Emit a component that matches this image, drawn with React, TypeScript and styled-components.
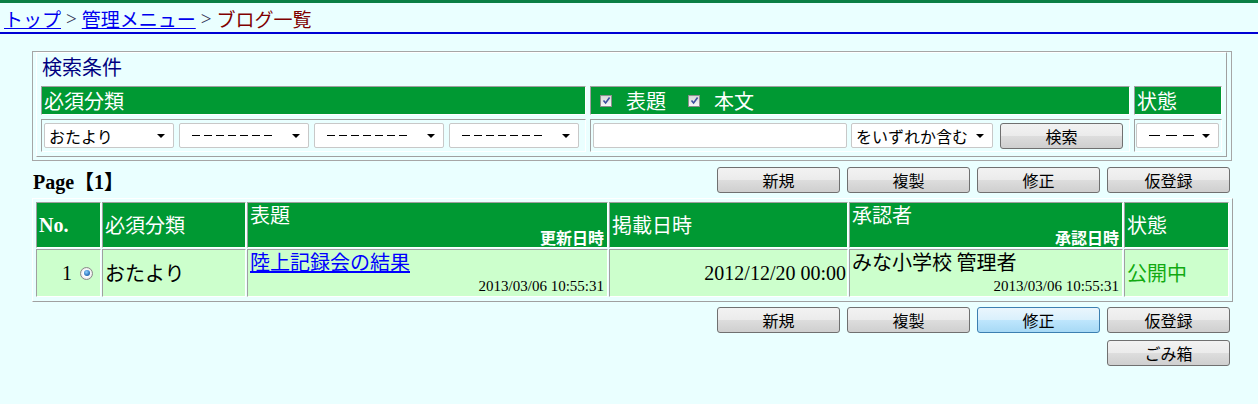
import React from 'react';
import styled, { createGlobalStyle } from 'styled-components';

const JP = `"Noto Sans CJK JP", "Liberation Sans", sans-serif`;
const SERIF = `"Liberation Serif", "Noto Sans CJK JP", serif`;

const GlobalStyle = createGlobalStyle`
  *, *::before, *::after { box-sizing: border-box; }
  html, body { margin: 0; padding: 0; }
  body {
    background: #eaffff;
    font-family: ${SERIF};
    color: #000;
  }
`;

const Screen = styled.div`
  width: 1258px;
  min-height: 404px;
  border-top: 3px solid #0b7f45;
`;

const Crumbs = styled.nav`
  height: 31px;
  display: flex;
  align-items: center;
  gap: 5px;
  padding: 2px 4px 0;
  border-bottom: 2px solid #0000d4;
  font-family: ${JP};
  font-size: 19px;
  line-height: 24px;
`;

const CrumbLink = styled.a`
  color: #0000ee;
  text-decoration: underline;
`;

const Sep = styled.span`
  font-family: ${SERIF};
  color: #333355;
`;

const Current = styled.span`
  color: #800000;
`;

const Content = styled.main`
  width: 1232px;
  padding: 17px 0 0 32px;
`;

/* ---- search box ---- */

const SearchBox = styled.section`
  width: 1200px;
  border: 1px solid #a6a6a6;
  padding: 0 4px 3px 3px;
`;

const SearchTable = styled.table`
  width: 100%;
  table-layout: fixed;
  border-collapse: separate;
  border-spacing: 4px;
  border: 1px solid;
  border-color: #ffffff #a0a0a0 #a0a0a0 #ffffff;
`;

const Col = styled.col<{ $w: number }>`
  width: ${(p) => p.$w}px;
`;

const TitleCell = styled.td`
  padding: 0 0 0 1px;
  height: 25px;
  font-family: ${JP};
  font-size: 20px;
  line-height: 20px;
  color: #000080;
  vertical-align: top;
`;

const HeadCell = styled.td`
  padding: 0 2px;
  height: 29px;
  border: 1px solid;
  border-color: #a0a0a0 #ffffff #ffffff #a0a0a0;
  background: #009933;
  color: #fff;
  font-family: ${JP};
  font-size: 20px;
  line-height: 26px;
  vertical-align: middle;
`;

const HeadInline = styled.div`
  display: flex;
  align-items: center;
  gap: 22px;
  padding-left: 7px;
`;

const CheckLabel = styled.span`
  display: inline-flex;
  align-items: center;
  gap: 14px;
`;

const CheckBox = styled.span`
  width: 12px;
  height: 12px;
  border: 1px solid #8e8f8f;
  background: linear-gradient(#d8d8d8, #f8f8f8);
  display: inline-flex;
  align-items: center;
  justify-content: center;
`;

const FieldCell = styled.td<{ $pl: number }>`
  padding: 0 0 0 ${(p) => p.$pl}px;
  height: 33px;
  border: 1px solid;
  border-color: #a0a0a0 #ffffff #ffffff #a0a0a0;
  vertical-align: middle;
`;

const FieldRow = styled.div<{ $gap: number }>`
  display: flex;
  align-items: center;
  gap: ${(p) => p.$gap}px;
`;

const SelectBox = styled.div<{ $w: number }>`
  width: ${(p) => p.$w}px;
  height: 25px;
  border: 1px solid #c8c8c8;
  border-radius: 2px;
  background: #fff;
  display: flex;
  align-items: center;
  justify-content: space-between;
  padding: 0 8px 0 4px;
  font-family: ${JP};
  font-size: 16px;
  line-height: 20px;
  white-space: nowrap;
  overflow: hidden;
`;

const Dashes = styled.span<{ $gap: number }>`
  display: flex;
  gap: ${(p) => p.$gap}px;
  padding-left: 8px;
`;

const Dash = styled.span<{ $w: number }>`
  width: ${(p) => p.$w}px;
  height: 1px;
  background: #000;
`;

const Arrow = styled.span`
  width: 0;
  height: 0;
  border-left: 4px solid transparent;
  border-right: 4px solid transparent;
  border-top: 4px solid #000;
  flex: none;
`;

const TextBox = styled.input`
  width: 254px;
  height: 25px;
  border: 1px solid #c8c8c8;
  border-radius: 2px;
  background: #fff;
  padding: 0 4px;
  font-size: 16px;
`;

/* ---- buttons ---- */

const Btn = styled.button<{ $focus?: boolean; $ml?: number }>`
  width: 123px;
  height: 26px;
  padding: 0;
  margin-left: ${(p) => p.$ml || 0}px;
  border: 1px solid ${(p) => (p.$focus ? '#3c7fb1' : '#707070')};
  border-radius: 3px;
  background: ${(p) =>
    p.$focus
      ? 'linear-gradient(#eaf6fd 0%, #d9f0fc 50%, #bee6fd 51%, #a7d9f5 100%)'
      : 'linear-gradient(#f2f2f2 0%, #ebebeb 50%, #dddddd 51%, #cfcfcf 100%)'};
  font-family: ${JP};
  font-size: 16px;
  line-height: 22px;
  color: #000;
`;

const BarRow = styled.div<{ $mt: number }>`
  width: 1200px;
  height: 26px;
  margin-top: ${(p) => p.$mt}px;
  display: flex;
  align-items: center;
  justify-content: space-between;
  padding-right: 2px;
`;

const BtnGroup = styled.div`
  display: flex;
  gap: 7px;
  margin-left: auto;
`;

const PageLabel = styled.div`
  font-family: ${SERIF};
  font-weight: bold;
  font-size: 20px;
  padding-left: 1px;
`;

/* ---- list table ---- */

const ListTable = styled.table`
  width: 1201px;
  margin-top: 5px;
  table-layout: fixed;
  border-collapse: separate;
  border-spacing: 1px;
  padding: 2px 2px 3px 2px;
  border: 1px solid;
  border-color: #ffffff #a0a0a0 #a0a0a0 #ffffff;
`;

const Th = styled.th`
  padding: 0;
  border: 1px solid;
  border-color: #a0a0a0 #ffffff #ffffff #a0a0a0;
  background: #009933;
  color: #fff;
  font-weight: normal;
  text-align: left;
  vertical-align: top;
`;

const HeadBox = styled.div<{ $split?: boolean }>`
  height: 44px;
  display: flex;
  flex-direction: column;
  justify-content: ${(p) => (p.$split ? 'space-between' : 'center')};
  padding: 0 3px 0 2px;
  font-family: ${JP};
  font-size: 20px;
  line-height: 24px;
`;

const NoHead = styled.span`
  font-family: ${SERIF};
  font-weight: bold;
`;

const SubHead = styled.span`
  align-self: flex-end;
  font-size: 16px;
  font-weight: bold;
  line-height: 19px;
`;

const Td = styled.td`
  padding: 0;
  border: 1px solid;
  border-color: #a0a0a0 #ffffff #ffffff #a0a0a0;
  background: #ccffcc;
  vertical-align: top;
`;

const DataBox = styled.div<{ $split?: boolean; $align?: string }>`
  height: 46px;
  display: flex;
  flex-direction: column;
  justify-content: ${(p) => (p.$split ? 'space-between' : 'center')};
  align-items: ${(p) => p.$align || 'flex-start'};
  padding: 0 3px 0 2px;
  font-family: ${JP};
  font-size: 20px;
  line-height: 24px;
`;

const NoBox = styled.div`
  height: 46px;
  display: flex;
  align-items: center;
  justify-content: flex-end;
  gap: 8px;
  padding-right: 7px;
  font-family: ${SERIF};
  font-size: 20px;
`;

const Radio = styled.span`
  width: 13px;
  height: 13px;
  border-radius: 50%;
  border: 1px solid #8a8a8a;
  background: radial-gradient(circle, #ffffff 40%, #d6d6d6 100%);
  display: inline-flex;
  align-items: center;
  justify-content: center;
  &::after {
    content: '';
    width: 6px;
    height: 6px;
    border-radius: 50%;
    background: radial-gradient(circle at 40% 35%, #8fd0ff 0%, #2f78c0 60%, #1a4f8a 100%);
  }
`;

const TitleLink = styled.a`
  color: #0000ff;
  text-decoration: underline;
`;

const Stamp = styled.span`
  align-self: flex-end;
  font-family: ${SERIF};
  font-size: 15px;
  line-height: 19px;
`;

const PostDate = styled.span`
  font-family: ${SERIF};
  font-size: 20px;
  margin-right: -2px;
`;

const Status = styled.span`
  color: #11aa11;
`;

const Check = () => (
  <CheckBox>
    <svg width="9" height="9" viewBox="0 0 9 9">
      <path d="M1.5 4.5 L3.6 7 L7.6 1.5" fill="none" stroke="#3d4f9e" strokeWidth="1.6" />
    </svg>
  </CheckBox>
);

const Select = ({ w, children }: { w: number; children: React.ReactNode }) => (
  <SelectBox $w={w}>
    <span>{children}</span>
    <Arrow />
  </SelectBox>
);

const DashSelect = ({ w, count, dash, gap }: { w: number; count: number; dash: number; gap: number }) => (
  <SelectBox $w={w}>
    <Dashes $gap={gap}>
      {Array.from({ length: count }, (_, i) => (
        <Dash key={i} $w={dash} />
      ))}
    </Dashes>
    <Arrow />
  </SelectBox>
);

const ActionButtons = ({ focus }: { focus?: boolean }) => (
  <BtnGroup>
    <Btn>新規</Btn>
    <Btn>複製</Btn>
    <Btn $focus={focus}>修正</Btn>
    <Btn>仮登録</Btn>
  </BtnGroup>
);

export default function App() {
  return (
    <>
      <GlobalStyle />
      <Screen>
        <Crumbs>
          <CrumbLink href="#">トップ</CrumbLink>
          <Sep>&gt;</Sep>
          <CrumbLink href="#">管理メニュー</CrumbLink>
          <Sep>&gt;</Sep>
          <Current>ブログ一覧</Current>
        </Crumbs>

        <Content>
          <SearchBox>
            <SearchTable>
              <colgroup>
                <Col $w={545} />
                <Col $w={540} />
                <Col $w={88} />
              </colgroup>
              <tbody>
                <tr>
                  <TitleCell colSpan={3}>検索条件</TitleCell>
                </tr>
                <tr>
                  <HeadCell>必須分類</HeadCell>
                  <HeadCell>
                    <HeadInline>
                      <CheckLabel>
                        <Check />
                        表題
                      </CheckLabel>
                      <CheckLabel>
                        <Check />
                        本文
                      </CheckLabel>
                    </HeadInline>
                  </HeadCell>
                  <HeadCell>状態</HeadCell>
                </tr>
                <tr>
                  <FieldCell $pl={2}>
                    <FieldRow $gap={5}>
                      <Select w={130}>おたより</Select>
                      <DashSelect w={130} count={7} dash={8} gap={4} />
                      <DashSelect w={130} count={7} dash={8} gap={4} />
                      <DashSelect w={130} count={7} dash={8} gap={4} />
                    </FieldRow>
                  </FieldCell>
                  <FieldCell $pl={2}>
                    <FieldRow $gap={4}>
                      <TextBox type="text" />
                      <Select w={142}>をいずれか含む</Select>
                      <Btn $ml={3}>検索</Btn>
                    </FieldRow>
                  </FieldCell>
                  <FieldCell $pl={1}>
                    <DashSelect w={83} count={3} dash={11} gap={6} />
                  </FieldCell>
                </tr>
              </tbody>
            </SearchTable>
          </SearchBox>

          <BarRow $mt={6}>
            <PageLabel>Page【1】</PageLabel>
            <ActionButtons />
          </BarRow>

          <ListTable>
            <colgroup>
              <Col $w={65} />
              <Col $w={144} />
              <Col $w={361} />
              <Col $w={239} />
              <Col $w={274} />
              <Col $w={105} />
            </colgroup>
            <thead>
              <tr>
                <Th>
                  <HeadBox>
                    <NoHead>No.</NoHead>
                  </HeadBox>
                </Th>
                <Th>
                  <HeadBox>必須分類</HeadBox>
                </Th>
                <Th>
                  <HeadBox $split>
                    <span>表題</span>
                    <SubHead>更新日時</SubHead>
                  </HeadBox>
                </Th>
                <Th>
                  <HeadBox>掲載日時</HeadBox>
                </Th>
                <Th>
                  <HeadBox $split>
                    <span>承認者</span>
                    <SubHead>承認日時</SubHead>
                  </HeadBox>
                </Th>
                <Th>
                  <HeadBox>状態</HeadBox>
                </Th>
              </tr>
            </thead>
            <tbody>
              <tr>
                <Td>
                  <NoBox>
                    1
                    <Radio />
                  </NoBox>
                </Td>
                <Td>
                  <DataBox>おたより</DataBox>
                </Td>
                <Td>
                  <DataBox $split>
                    <TitleLink href="#">陸上記録会の結果</TitleLink>
                    <Stamp>2013/03/06 10:55:31</Stamp>
                  </DataBox>
                </Td>
                <Td>
                  <DataBox $align="flex-end">
                    <PostDate>2012/12/20 00:00</PostDate>
                  </DataBox>
                </Td>
                <Td>
                  <DataBox $split>
                    <span>みな小学校 管理者</span>
                    <Stamp>2013/03/06 10:55:31</Stamp>
                  </DataBox>
                </Td>
                <Td>
                  <DataBox>
                    <Status>公開中</Status>
                  </DataBox>
                </Td>
              </tr>
            </tbody>
          </ListTable>

          <BarRow $mt={5}>
            <ActionButtons focus />
          </BarRow>
          <BarRow $mt={7}>
            <BtnGroup>
              <Btn>ごみ箱</Btn>
            </BtnGroup>
          </BarRow>
        </Content>
      </Screen>
    </>
  );
}
